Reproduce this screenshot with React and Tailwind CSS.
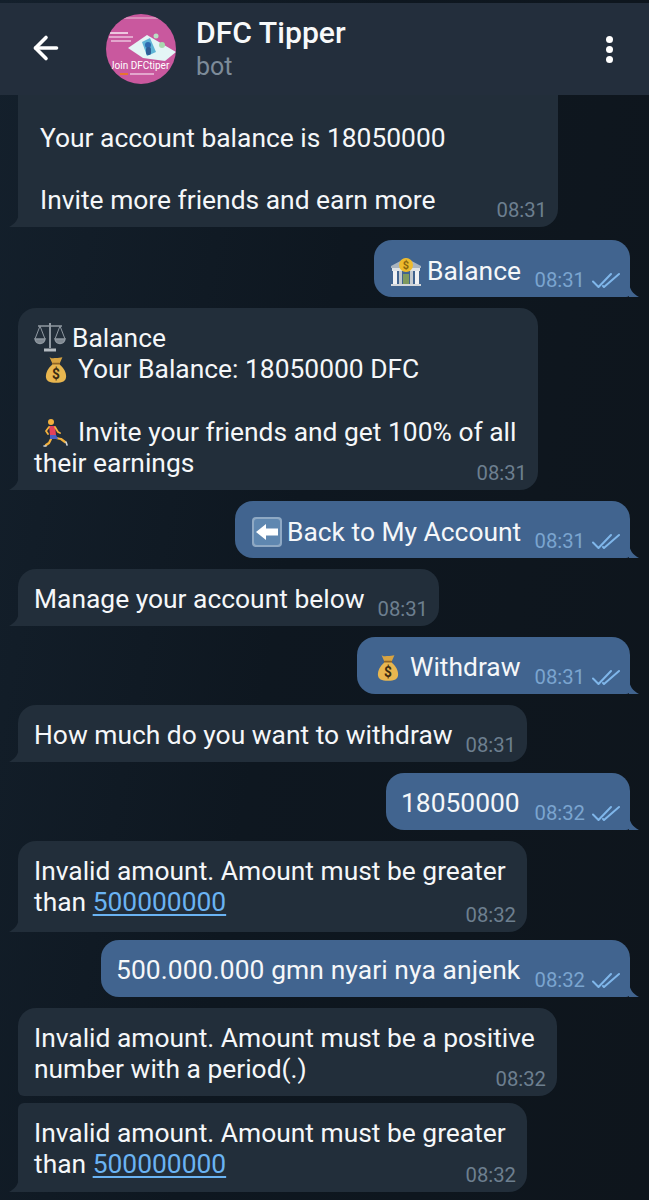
import React from 'react';
import { ArrowLeft } from 'lucide-react';

const Checks = () => (
  <svg viewBox="0 0 28 16" className="w-[28px] h-[16px]" fill="none" stroke="#7fb6ea" strokeWidth="2" strokeLinecap="round" strokeLinejoin="round">
    <path d="M1 9.5 L6.5 15 L19 2" />
    <path d="M11 14 L12 15 L27 2" />
  </svg>
);

const TailLeft = ({ color = '#222e3a' }) => (
  <svg viewBox="0 0 10 16" className="absolute left-[-9px] bottom-0 w-[10px] h-[16px]">
    <path d="M10 0 C10 8 6 13 0 16 L10 16 Z" fill={color} />
  </svg>
);

const TailRight = () => (
  <svg viewBox="0 0 10 16" className="absolute right-[-9px] bottom-0 w-[10px] h-[16px]">
    <path d="M0 0 C0 8 4 13 10 16 L0 16 Z" fill="#41648f" />
  </svg>
);

const BankIcon = () => (
  <svg viewBox="0 0 32 32" className="inline-block w-[32px] h-[32px] align-[-7px] mr-[5px]">
    <path d="M1 11 L16 3 L31 11 L31 13 L1 13 Z" fill="#a9b4bf" />
    <rect x="2" y="13" width="28" height="3" fill="#dfe3e6" />
    <rect x="3" y="16" width="4" height="13" fill="#f1f2f3" />
    <rect x="9" y="16" width="3" height="13" fill="#c3c9ce" />
    <rect x="13" y="19" width="6" height="10" fill="#7f9a5e" />
    <rect x="20" y="16" width="3" height="13" fill="#c3c9ce" />
    <rect x="25" y="16" width="4" height="13" fill="#f1f2f3" />
    <rect x="1" y="29" width="30" height="2" fill="#d5d8db" />
    <circle cx="16" cy="10" r="7" fill="#eebb2c" />
    <text x="16" y="14" fontSize="11" fontWeight="700" textAnchor="middle" fill="#8a6510" fontFamily="Roboto, sans-serif">$</text>
  </svg>
);

const BagIcon = ({ className }) => (
  <svg viewBox="0 0 24 30" className={`inline-block w-[22px] h-[28px] align-[-6px] ${className}`}>
    <path d="M5 1 C8 3 10 2 12 2 C14 2 17 1 19 1 L16 8 L8 8 Z" fill="#d9a441" />
    <rect x="7.5" y="7" width="9" height="2.5" rx="1" fill="#8f6426" />
    <path d="M8 9 L16 9 C21 13 23 18 23 22 C23 27 19 29 12 29 C5 29 1 27 1 22 C1 18 3 13 8 9 Z" fill="#e8b64f" />
    <text x="12" y="25" fontSize="15" fontWeight="700" textAnchor="middle" fill="#3a2b12" fontFamily="Roboto, sans-serif">$</text>
  </svg>
);

const ScaleIcon = () => (
  <svg viewBox="0 0 32 32" className="inline-block w-[32px] h-[32px] align-[-6px] mr-[6px]" fill="none" stroke="#8f98a1" strokeWidth="1.5">
    <path d="M16 2 L16 27" strokeWidth="2" />
    <path d="M4 5 L28 5" />
    <path d="M6 5 L1 18 M6 5 L11 18 M26 5 L21 18 M26 5 L31 18" strokeWidth="1" />
    <path d="M1 18 C2 24 10 24 11 18 Z" fill="#7f8891" />
    <path d="M21 18 C22 24 30 24 31 18 Z" fill="#7f8891" />
    <path d="M10 29 L22 29" strokeWidth="3" stroke="#b4bbc1" />
  </svg>
);

const RunnerIcon = () => (
  <svg viewBox="0 0 26 30" className="inline-block w-[26px] h-[30px] align-[-7px] ml-[9px] mr-[9px]" fill="none" strokeLinecap="round" strokeLinejoin="round">
    <circle cx="8" cy="4" r="3" fill="#f3b13d" />
    <path d="M6 8 L12 8 L13 17 L7 17 Z" fill="#e5405a" />
    <path d="M6 9 L3 13 L5 16" stroke="#f3b13d" strokeWidth="1.8" />
    <path d="M12 9 L15 14 L17 15" stroke="#f3b13d" strokeWidth="1.8" />
    <path d="M8 21 L6 25 L3 27" stroke="#f3b13d" strokeWidth="2.2" />
    <path d="M13 20 L18 21 L22 24" stroke="#f3b13d" strokeWidth="2.2" />
    <path d="M7 17 L13 17 L15 21 L7 21 Z" fill="#4a5fc0" />
    <path d="M1 28 L3 28 M23 24 L24 27" stroke="#cfd4d8" strokeWidth="1.6" />
  </svg>
);

const BackIcon = () => (
  <svg viewBox="0 0 32 32" className="inline-block w-[32px] h-[32px] align-[-7px] mr-[4px]">
    <rect x="1" y="1" width="30" height="30" rx="4" fill="#8fa9c4" />
    <rect x="3" y="3" width="26" height="26" rx="3" fill="#5f87b0" />
    <path d="M5 16 L15 8 L15 12.5 L27 12.5 L27 19.5 L15 19.5 L15 24 Z" fill="#ffffff" />
  </svg>
);

const Avatar = () => (
  <svg viewBox="0 0 70 70" className="w-[70px] h-[70px] rounded-full shrink-0">
    <rect width="70" height="70" fill="#c9589e" />
    <rect x="15" y="3" width="40" height="2" fill="#d98bb9" />
    <path d="M22 34 L41 21 L70 38 L59 47 L37 44 Z" fill="#e4f5f6" />
    <path d="M36 28 L44 24 L50 38 L41 42 Z" fill="#5fb4d6" />
    <circle cx="42" cy="31" r="3" fill="#2f6bb0" />
    <rect x="40" y="33" width="5" height="8" rx="2" fill="#2f5d96" />
    <circle cx="56" cy="31" r="3" fill="#a9d9b0" />
    <circle cx="50" cy="22" r="2.5" fill="#b9dfc4" />
    <rect x="4" y="18" width="18" height="2" fill="#edc7df" />
    <rect x="3" y="22" width="24" height="2" fill="#e3a6cd" />
    <rect x="5" y="26" width="20" height="2" fill="#e3a6cd" />
    <text x="3" y="55" fontSize="10" fill="#ffffff" fontFamily="Roboto, sans-serif">Join DFCtiper</text>
    <rect x="14" y="59" width="8" height="2" fill="#e8742f" />
    <rect x="24" y="59" width="24" height="2" fill="#e3a6cd" />
  </svg>
);

const OutBubble = ({ className, children, time }) => (
  <div className="flex justify-end pr-[19px]">
    <div className={`relative h-[57px] rounded-[18px] rounded-br-[4px] bg-[#41648f] pl-[16px] pt-[15px] text-[26.4px] leading-[31px] text-[#f5f7f9] whitespace-nowrap ${className}`}>
      <div className="h-[31px]">{children}</div>
      <span className="absolute right-[10px] bottom-[6px] flex items-center gap-[7px]">
        <span className="text-[20.3px] leading-[22px] tracking-normal text-[#7ba5cf]">{time}</span>
        <Checks />
      </span>
      <TailRight />
    </div>
  </div>
);

const InBubble = ({ className, children, time, tail = true }) => (
  <div className="flex justify-start pl-[18px]">
    <div className={`relative rounded-[18px] bg-[#222e3a] pl-[16px] text-[26.4px] leading-[31px] text-[#f5f7f9] whitespace-nowrap ${tail ? 'rounded-bl-none' : ''} ${className}`}>
      {children}
      <span className="absolute right-[11px] bottom-[6px] text-[20.3px] leading-[22px] text-[#6d7f8f]">{time}</span>
      {tail && <TailLeft />}
    </div>
  </div>
);

const Line = ({ children, className = 'h-[31px]' }) => <div className={className}>{children}</div>;

const Amount = () => <span className="text-[#6ab3f3] underline underline-offset-[3px]">500000000</span>;

export default function App() {
  return (
    <div className="w-[649px] h-[1200px] overflow-hidden flex flex-col bg-[linear-gradient(100deg,#14202c_0%,#0e1720_45%,#0e151c_100%)] font-['Roboto',sans-serif]">
      <header className="h-[92px] shrink-0 mt-[3px] bg-[#232e3c] flex items-center pl-[28px] pr-[36px] z-10">
        <ArrowLeft size={36} strokeWidth={2.4} className="text-white shrink-0 mt-[-2px]" />
        <div className="ml-[42px] mr-[20px]">
          <Avatar />
        </div>
        <div className="flex-1">
          <div className="text-[30.2px] leading-[36px] font-medium text-[#f7f9fa]">DFC Tipper</div>
          <div className="text-[25px] leading-[32px] text-[#7d8b99]">bot</div>
        </div>
        <div className="flex flex-col gap-[3px]">
          <span className="w-[7px] h-[7px] rounded-full bg-white" />
          <span className="w-[7px] h-[7px] rounded-full bg-white" />
          <span className="w-[7px] h-[7px] rounded-full bg-white" />
        </div>
      </header>

      <main className="flex flex-col">
        <InBubble className="w-[540px] h-[132px] pt-[28px] rounded-t-none !pl-[22px]" time="08:31">
          <Line>Your account balance is 18050000</Line>
          <Line />
          <Line>Invite more friends and earn more</Line>
        </InBubble>

        <div className="mt-[13px]">
          <OutBubble className="w-[256px]" time="08:31"><BankIcon />Balance</OutBubble>
        </div>

        <div className="mt-[11px]">
          <InBubble className="w-[520px] h-[182px] pt-[13px]" time="08:31">
            <Line className="h-[33px]"><ScaleIcon />Balance</Line>
            <Line><BagIcon className="ml-[11px] mr-[11px]" />Your Balance: 18050000 DFC</Line>
            <Line className="h-[32px]" />
            <Line><RunnerIcon />Invite your friends and get 100% of all</Line>
            <Line>their earnings</Line>
          </InBubble>
        </div>

        <div className="mt-[11px]">
          <OutBubble className="w-[395px]" time="08:31"><BackIcon />Back to My Account</OutBubble>
        </div>

        <div className="mt-[11px]">
          <InBubble className="w-[421px] h-[57px] pt-[15px]" time="08:31">Manage your account below</InBubble>
        </div>

        <div className="mt-[11px]">
          <OutBubble className="w-[273px]" time="08:31"><BagIcon className="ml-[4px] mr-[11px]" />Withdraw</OutBubble>
        </div>

        <div className="mt-[11px]">
          <InBubble className="w-[509px] h-[57px] pt-[15px]" time="08:31">How much do you want to withdraw</InBubble>
        </div>

        <div className="mt-[11px]">
          <OutBubble className="w-[244px] !pl-[15px]" time="08:32">18050000</OutBubble>
        </div>

        <div className="mt-[11px]">
          <InBubble className="w-[509px] h-[91px] pt-[15px]" time="08:32">
            <Line>Invalid amount. Amount must be greater</Line>
            <Line>than <Amount /></Line>
          </InBubble>
        </div>

        <div className="mt-[8px]">
          <OutBubble className="w-[529px] !pl-[15px]" time="08:32"><span className="tracking-[0.1px]">500.000.000 gmn nyari nya anjenk</span></OutBubble>
        </div>

        <div className="mt-[11px]">
          <InBubble className="w-[539px] h-[88px] pt-[15px] rounded-bl-[6px]" time="08:32" tail={false}>
            <Line>Invalid amount. Amount must be a positive</Line>
            <Line>number with a period(.)</Line>
          </InBubble>
        </div>

        <div className="mt-[7px]">
          <InBubble className="w-[509px] h-[89px] pt-[15px] rounded-tl-[6px]" time="08:32">
            <Line>Invalid amount. Amount must be greater</Line>
            <Line>than <Amount /></Line>
          </InBubble>
        </div>
      </main>
    </div>
  );
}
